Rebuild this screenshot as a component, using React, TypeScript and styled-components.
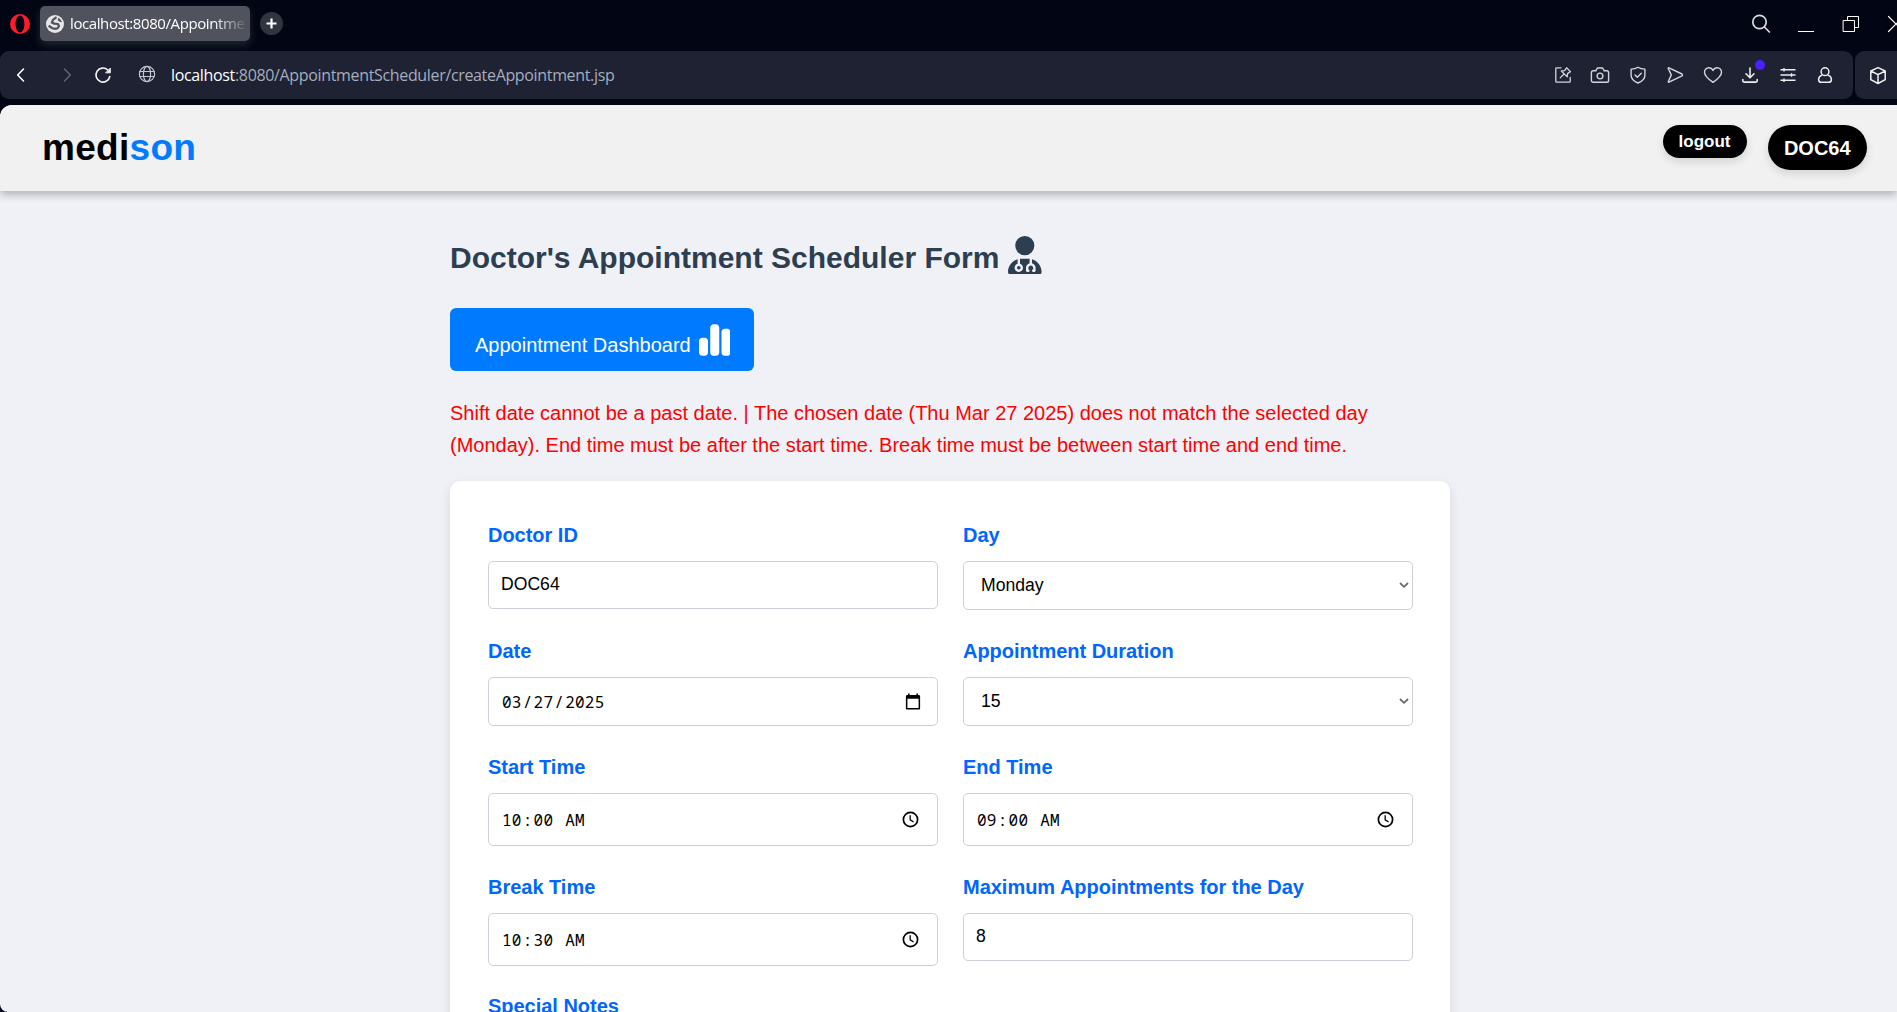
import React from "react";
import styled, { createGlobalStyle } from "styled-components";
import { FaChartSimple, FaUserDoctor } from "react-icons/fa6";

const Global = createGlobalStyle`
  *, *::before, *::after { box-sizing: border-box; }
  html, body { margin: 0; height: 1012px; overflow: hidden; background: #020614; }
  body { font-family: "Liberation Sans", Arial, sans-serif; }
  svg { display: block; flex: none; }
`;

const Window = styled.div`
  width: 1897px;
  height: 1012px;
  display: flex;
  flex-direction: column;
  overflow: hidden;
  background: #020614;
`;

const TabStrip = styled.div`
  height: 51px;
  flex: none;
  display: flex;
  align-items: center;
  padding: 0 0 4px 10px;
`;

const Tab = styled.div`
  width: 210px;
  height: 35px;
  flex: none;
  margin-left: 10px;
  padding: 0 5px 0 6px;
  border-radius: 5px;
  background: #50525d;
  box-shadow: 0 4px 8px rgba(80, 82, 93, 0.4);
  display: flex;
  align-items: center;
  gap: 6px;
`;

const TabTitle = styled.span`
  flex: 1;
  white-space: nowrap;
  padding-bottom: 1px;
  font: 15px/20px "Open Sans", "Noto Sans", sans-serif;
  letter-spacing: -0.4px;
  color: #fff;
  mask-image: linear-gradient(to right, #000 82%, transparent 102%);
`;

const NewTab = styled.div`
  width: 23px;
  height: 23px;
  margin-left: 10px;
  border-radius: 50%;
  background: #30343f;
  display: grid;
  place-items: center;
`;

const WindowControls = styled.div`
  margin-left: auto;
  display: flex;
  align-items: center;
  gap: 25px;
  margin-right: -9px;
`;

const Toolbar = styled.div`
  height: 48px;
  flex: none;
  display: flex;
  gap: 2px;
  margin-bottom: 6px;
`;

const AddressBar = styled.div`
  width: 1853px;
  flex: none;
  border-radius: 9px;
  background: #1e2233;
  display: flex;
  align-items: center;
  padding: 0 18px 0 10px;
`;

const SidePanel = styled.div`
  width: 60px;
  flex: none;
  border-radius: 9px;
  background: #1e2233;
  display: flex;
  align-items: center;
  padding-left: 13px;
`;

const NavIcons = styled.div`
  display: flex;
  align-items: center;
  svg:nth-child(2) { margin-left: 27px; }
  svg:nth-child(3) { margin-left: 16px; }
  svg:nth-child(4) { margin: -2px 0 0 24px; }
`;

const Url = styled.div`
  margin-left: 14px;
  font: 16px/24px "Open Sans", "Noto Sans", sans-serif;
  letter-spacing: -0.34px;
  color: #a4adbf;
  white-space: nowrap;
  b { font-weight: 400; color: #fff; }
`;

const Actions = styled.div`
  margin: -1px 0 0 auto;
  display: flex;
  align-items: center;
  gap: 17.5px;
`;

const Action = styled.div`
  position: relative;
  width: 20px;
  height: 20px;
`;

const Dot = styled.i`
  position: absolute;
  top: -5px;
  right: -5px;
  width: 10px;
  height: 10px;
  border-radius: 50%;
  background: #4b20ff;
`;

const Page = styled.div`
  flex: 1;
  min-height: 0;
  border-radius: 12px 0 0 8px;
  background: #f0f1f6;
  overflow: hidden;
`;

const Header = styled.header`
  height: 86px;
  background: #f1f1f1;
  box-shadow: 0 4px 8px rgba(0, 0, 0, 0.25);
  display: flex;
  justify-content: space-between;
  align-items: flex-start;
  padding: 20px 30px 0 42px;
`;

const Brand = styled.div`
  font-size: 37px;
  line-height: 46px;
  font-weight: 700;
  letter-spacing: 0.3px;
  color: #000;
  span { color: #007bff; }
`;

const HeaderActions = styled.div`
  display: flex;
  align-items: flex-start;
  gap: 21px;
`;

const Pill = styled.button<{ $large?: boolean }>`
  border: 0;
  width: ${(p) => (p.$large ? 99.5 : 84)}px;
  height: ${(p) => (p.$large ? 45 : 33)}px;
  padding: ${(p) => (p.$large ? 1 : 0)}px 0 0;
  border-radius: 30px;
  background: #000;
  color: #fff;
  font: 700 ${(p) => (p.$large ? 20 : 17)}px "Liberation Sans", Arial, sans-serif;
  box-shadow: 0 4px 8px rgba(0, 0, 0, 0.12);
`;

const Content = styled.main`
  width: 1000px;
  margin-left: 450px;
`;

const Title = styled.h1`
  margin: 0;
  padding-top: 44px;
  height: 117px;
  display: flex;
  align-items: flex-start;
  gap: 9px;
  font-size: 30px;
  line-height: 46px;
  color: #2c3e50;
  white-space: nowrap;
  svg { width: 33.6px; height: 38.4px; margin-top: 0.5px; }
`;

const DashboardButton = styled.button`
  width: 304px;
  height: 63px;
  border: 0;
  border-radius: 6px;
  background: #007bff;
  color: #fff;
  display: flex;
  align-items: flex-start;
  gap: 8px;
  padding: 14px 0 0 25px;
  font: 20px/47px "Liberation Sans", Arial, sans-serif;
  white-space: nowrap;
  svg { width: 31.5px; height: 36px; }
`;

const ErrorText = styled.p`
  margin: 26px 0 20px;
  width: 960px;
  font-size: 20px;
  line-height: 32px;
  color: #f00;
`;

const Card = styled.form`
  width: 1000px;
  padding: 38px 37px 60px 38px;
  border-radius: 10px;
  background: #fff;
  box-shadow: 0 4px 12px rgba(0, 0, 0, 0.1);
  display: grid;
  grid-template-columns: 450px 450px;
  column-gap: 25px;
  grid-template-rows: 116px 116px 120px 119px auto;
`;

const Field = styled.label`
  display: flex;
  flex-direction: column;
`;

const Label = styled.span`
  font-size: 20px;
  line-height: 32px;
  margin-bottom: 10px;
  font-weight: 700;
  letter-spacing: -0.02px;
  color: #0066ff;
`;

type Kind = "text" | "select" | "date" | "time";
const heights: Record<Kind, number> = { text: 48, select: 49, date: 49, time: 53 };
const pads: Record<Kind, string> = {
  text: "0 12px 2px",
  select: "0 3px 1px 17px",
  date: "0 16px 0 12px",
  time: "0 18px 0 12px",
};

const Control = styled.div<{ $kind: Kind }>`
  height: ${(p) => heights[p.$kind]}px;
  padding: ${(p) => pads[p.$kind]};
  border: 1px solid #ced0da;
  border-radius: 5px;
  background: #fff;
  display: flex;
  align-items: center;
  justify-content: space-between;
  color: #000;
  font: 17.6px "Liberation Sans", Arial, sans-serif;
`;

const Segments = styled.span`
  font: 16px/20px "Noto Sans Mono", "DejaVu Sans Mono", monospace;
  letter-spacing: 0.25px;
  white-space: pre;
`;

const Segment = styled.span`
  padding: 0 1px;
`;

const ChevronIcon = () => (
  <svg width="10" height="8" viewBox="0 0 10 8" fill="none" stroke="#6b6b6b" strokeWidth="1.8">
    <path d="M1 2l4 3.8L9 2" />
  </svg>
);

const CalendarIcon = () => (
  <svg width="16" height="17" viewBox="0 0 16 17">
    <path fillRule="evenodd" fill="#000" d="M3 .5h1.6v1.4h6.8V.5H13v1.4h.8c.7 0 1.3.6 1.3 1.3v12c0 .7-.6 1.3-1.3 1.3H2.2c-.7 0-1.3-.6-1.3-1.3v-12c0-.7.6-1.3 1.3-1.3H3zM2.4 5.8V15h11.2V5.8z" />
  </svg>
);

const ClockIcon = () => (
  <svg width="17" height="17" viewBox="0 0 17 17" fill="none" stroke="#000">
    <circle cx="8.5" cy="8.5" r="7.1" strokeWidth="1.7" />
    <path d="M8.2 4.3v4.5l3.4 2.2" strokeWidth="1.3" />
  </svg>
);

const trailing: Record<Kind, React.ReactNode> = {
  text: null,
  select: <ChevronIcon />,
  date: <CalendarIcon />,
  time: <ClockIcon />,
};

function FormField({ label, value = "", kind }: { label: string; value?: string; kind: Kind }) {
  const segmented = kind === "date" || kind === "time";
  return (
    <Field>
      <Label>{label}</Label>
      <Control $kind={kind}>
        {segmented ? (
          <Segments>
            {value.split(/([/: ])/).map((part, i) =>
              i % 2 ? part : <Segment key={i}>{part}</Segment>
            )}
          </Segments>
        ) : (
          <span>{value}</span>
        )}
        {trailing[kind]}
      </Control>
    </Field>
  );
}

function Line({ size = 20, color = "#d3d5dc", width = 1.4, children }: {
  size?: number;
  color?: string;
  width?: number;
  children: React.ReactNode;
}) {
  return (
    <svg
      width={size}
      height={size}
      viewBox={`0 0 ${size} ${size}`}
      fill="none"
      stroke={color}
      strokeWidth={width}
      strokeLinecap="round"
      strokeLinejoin="round"
    >
      {children}
    </svg>
  );
}

const OperaLogo = () => (
  <svg width="20" height="20" viewBox="0 0 20 20">
    <path fill="#ff1b2d" fillRule="evenodd" d="M10 0a10 10 0 1 0 0 20 10 10 0 0 0 0-20zm0 1.6c2.6 0 4.4 3.7 4.4 8.4s-1.8 8.4-4.4 8.4S5.600 14.700 5.600 10 7.400 1.600 10 1.600z" />
  </svg>
);

const TabGlobe = () => (
  <svg width="18" height="18" viewBox="0 0 18 18">
    <circle cx="9" cy="9" r="9" fill="#e4e6e9" />
    <path
      fill="none"
      stroke="#50525d"
      strokeWidth="2.2"
      strokeLinejoin="round"
      d="M10.500 2.200L7 4.800 5.800 7.600l2.600 1 3.600.4 1 2.200-1.600 2.200-3 .4-2-.6-3.800-2.400"
    />
    <path fill="#50525d" d="M12 2.800l2.600 1.600 1.400 2.800-2.400-.4-1.800-1.600z" />
  </svg>
);

export default function App() {
  return (
    <Window>
      <Global />
      <TabStrip>
        <OperaLogo />
        <Tab>
          <TabGlobe />
          <TabTitle>localhost:8080/Appointme</TabTitle>
        </Tab>
        <NewTab>
          <svg width="11" height="11" viewBox="0 0 11 11" stroke="#fff" strokeWidth="2.2">
            <path d="M5.500 .5v10M.5 5.500h10" />
          </svg>
        </NewTab>
        <WindowControls>
          <Line color="#d9dbe2" width={1.7}>
            <circle cx="8.500" cy="8" r="6.700" />
            <path d="M13.400 13l5 5" />
          </Line>
          <Line color="#fff" width={1}>
            <path strokeLinecap="butt" d="M2 17.500h16" />
          </Line>
          <Line color="#fff" width={1}>
            <path strokeLinejoin="miter" d="M2.500 6.500h11v11h-11zM6.500 6.500v-4h11v11h-4" />
          </Line>
          <Line color="#fff" width={1.2}>
            <path d="M2.500 2.500l15 15M17.500 2.500l-15 15" />
          </Line>
        </WindowControls>
      </TabStrip>
      <Toolbar>
        <AddressBar>
          <NavIcons>
            <Line color="#fff" width={1.6}><path d="M13.500 4l-5.800 6 5.800 6" /></Line>
            <Line color="#636777" width={1.4}><path d="M7.500 4l5.800 6-5.800 6" /></Line>
            <Line color="#f4f4f6" width={1.6}>
              <path d="M16.800 11.500a7 7 0 1 1-2-6.500" />
              <path fill="#f4f4f6" strokeWidth="1" d="M17.300 3.500v4.300h-4.300z" />
            </Line>
            <Line color="#c3c6ce" width={1.2}>
              <circle cx="10" cy="10" r="7.600" />
              <ellipse cx="10" cy="10" rx="3.600" ry="7.600" />
              <path d="M2.800 7.500h14.400M2.800 12.500h14.400" />
            </Line>
          </NavIcons>
          <Url><b>localhost</b>:8080/AppointmentScheduler/createAppointment.jsp</Url>
          <Actions>
            <Action>
              <Line width={1.3}>
                <path d="M8 2.800H3.600a.8.800 0 0 0-.8.800v12.800c0 .4.400.8.800.8h12.800c.4 0 .8-.4.8-.8V12.500" />
                <path d="M13.600 2.800l3.800 3.800-2.900 2-.3 3.300-5.900-5.900 3.300-.3zM11 9l-3.800 3.900" />
              </Line>
            </Action>
            <Action>
              <Line>
                <path d="M3.200 5.800h2.600L7.300 3h5.400l1.500 2.800h2.600a1.800 1.800 0 0 1 1.800 1.800v7.800a1.800 1.800 0 0 1-1.800 1.800H3.200a1.800 1.800 0 0 1-1.800-1.800V7.600a1.800 1.800 0 0 1 1.800-1.800z" />
                <circle cx="10" cy="11" r="2.900" />
              </Line>
            </Action>
            <Action>
              <Line>
                <path d="M10 2.200c2 1.400 4.400 1.900 6.900 1.900v6.200c0 3.400-2.700 6-6.900 7.700-4.200-1.700-6.900-4.300-6.900-7.700V4.100c2.500 0 4.900-.5 6.900-1.900z" />
                <path d="M7 9.900l2.300 2.300 4-4" />
              </Line>
            </Action>
            <Action>
              <Line>
                <path d="M4 2.800l13 6.200c.7.400.7 1.400 0 1.800L4 17.200c-.5.200-.9-.2-.7-.7l3-6.600-3.100-6.400c-.2-.5.300-.9.800-.7z" />
              </Line>
            </Action>
            <Action>
              <Line>
                <path d="M10 17.400C5 13.900 1.500 11 1.500 7.300c0-2.600 1.900-4.600 4.300-4.600 1.800 0 3.300 1 4.200 2.800.9-1.800 2.400-2.800 4.200-2.800 2.400 0 4.300 2 4.300 4.600 0 3.700-3.500 6.600-8.500 10.100z" />
              </Line>
            </Action>
            <Action>
              <Line color="#eceef2" width={1.6}>
                <path d="M10 3v9.500M6 8.800l4 4 4-4M2.800 14.500v1.300c0 .8.500 1.300 1.300 1.300h11.800c.8 0 1.300-.5 1.300-1.300v-1.300" />
              </Line>
              <Dot />
            </Action>
            <Action>
              <Line color="#eceef2" width={1.4}>
                <path strokeLinecap="butt" d="M2.500 4.800h15M2.500 10h15M2.500 15.200h15M6 3v3.600M13.500 8.200v3.600M6 13.400V17" />
              </Line>
            </Action>
            <Action>
              <Line color="#eceef2" width={1.5}>
                <circle cx="10" cy="6.700" r="3.900" />
                <path d="M6.600 10.400c-2 .8-3 2.200-3 4 0 1.700 1 2.900 2.700 2.900h7.400c1.700 0 2.700-1.200 2.700-2.900 0-1.800-1-3.200-3-4" />
              </Line>
            </Action>
          </Actions>
        </AddressBar>
        <SidePanel>
          <Line color="#f0f1f4" width={1.5}>
            <path d="M10 2.600l7.200 3.400v8.700L10 18.500l-7.200-3.800V6zM2.800 6l7.200 3.600L17.200 6M10 9.600v8.900" />
          </Line>
        </SidePanel>
      </Toolbar>
      <Page>
        <Header>
          <Brand>medi<span>son</span></Brand>
          <HeaderActions>
            <Pill>logout</Pill>
            <Pill $large>DOC64</Pill>
          </HeaderActions>
        </Header>
        <Content>
          <Title>
            Doctor's Appointment Scheduler Form
            <FaUserDoctor />
          </Title>
          <DashboardButton>
            Appointment Dashboard
            <FaChartSimple />
          </DashboardButton>
          <ErrorText>
            Shift date cannot be a past date. | The chosen date (Thu Mar 27 2025) does not match the
            selected day (Monday). End time must be after the start time. Break time must be between
            start time and end time.
          </ErrorText>
          <Card>
            <FormField label="Doctor ID" value="DOC64" kind="text" />
            <FormField label="Day" value="Monday" kind="select" />
            <FormField label="Date" value="03/27/2025" kind="date" />
            <FormField label="Appointment Duration" value="15" kind="select" />
            <FormField label="Start Time" value="10:00 AM" kind="time" />
            <FormField label="End Time" value="09:00 AM" kind="time" />
            <FormField label="Break Time" value="10:30 AM" kind="time" />
            <FormField label="Maximum Appointments for the Day" value="8" kind="text" />
            <FormField label="Special Notes" kind="text" />
          </Card>
        </Content>
      </Page>
    </Window>
  );
}
